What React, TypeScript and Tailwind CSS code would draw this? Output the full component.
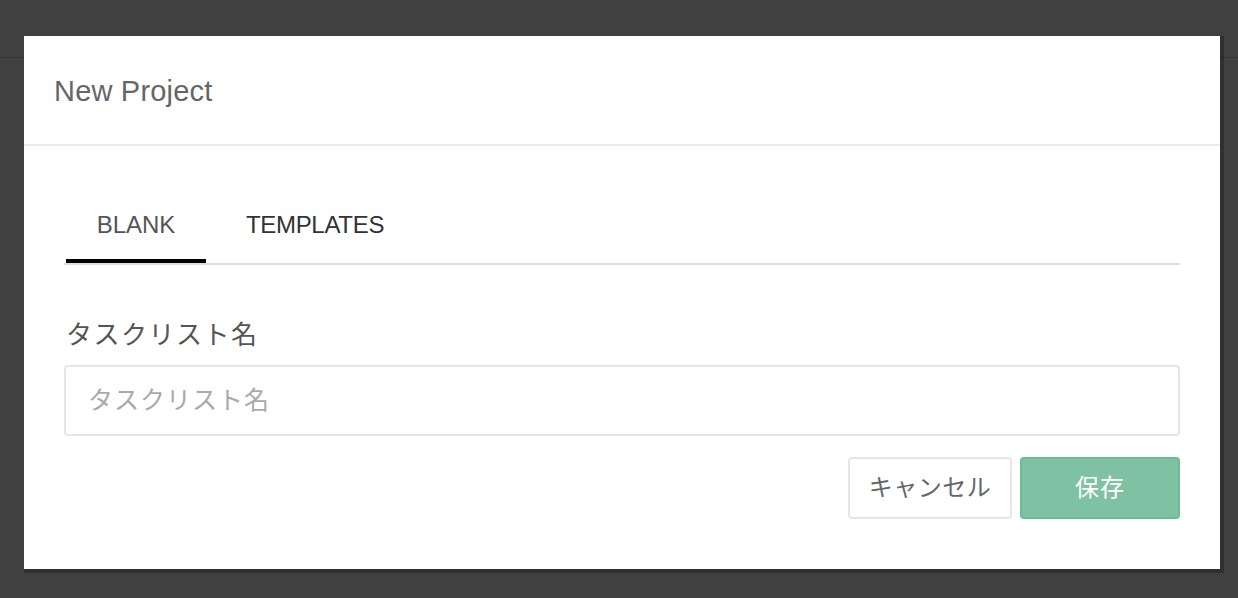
import React, { useState } from 'react';

const font = { fontFamily: '"Liberation Sans", "Noto Sans CJK JP", sans-serif' };

const App: React.FC = () => {
  const [tab, setTab] = useState<'blank' | 'templates'>('blank');
  const [name, setName] = useState('');

  return (
    <div className="min-h-[598px] w-full bg-[#404040] relative overflow-hidden" style={font}>
      {/* app header behind the overlay */}
      <div className="h-[58px] border-b border-[#353535]" />

      <div className="absolute left-[24px] top-[36px] w-[1196px] bg-white shadow-[2px_2px_0_2px_rgba(0,0,0,0.25)]">
        <div className="h-[110px] flex items-center px-[30px] pt-[4px] border-b-2 border-[#ebebeb]">
          <h2 className="text-[29px] text-[#666] tracking-[0.2px]">New Project</h2>
        </div>

        <div className="px-[40px] pt-[44px] pb-[50px]">
          <div className="flex border-b-2 border-[#dedede]">
            <button
              onClick={() => setTab('blank')}
              className={`w-[140px] h-[73px] ml-[2px] border-b-4 text-[24px] ${
                tab === 'blank' ? 'text-[#555] border-black' : 'text-[#333] border-transparent'
              }`}
            >
              BLANK
            </button>
            <button
              onClick={() => setTab('templates')}
              className={`w-[218px] h-[73px] border-b-4 text-[24px] tracking-[-0.3px] ${
                tab === 'templates' ? 'text-[#555] border-black' : 'text-[#333] border-transparent'
              }`}
            >
              TEMPLATES
            </button>
          </div>

          <label className="block mt-[52px] ml-[2px] text-[26px] leading-[36px] text-[#555] tracking-[1.5px]">
            タスクリスト名
          </label>
          <input
            value={name}
            onChange={(e) => setName(e.target.value)}
            placeholder="タスクリスト名"
            className="mt-[12px] w-full h-[71px] px-[22px] border-2 border-[#e6e6e6] rounded-[4px] text-[25px] text-[#555] placeholder:text-[#aaa] tracking-[1px] outline-none"
          />

          <div className="flex justify-end gap-[8px] mt-[21px]">
            <button className="w-[164px] h-[62px] border-2 border-[#e6e6e6] rounded-[4px] text-[24px] text-[#666] tracking-[0.5px]">
              キャンセル
            </button>
            <button className="w-[160px] h-[62px] border-2 border-[#6dba94] bg-[#7fc1a3] rounded-[4px] text-[24px] text-white tracking-[1px]">
              保存
            </button>
          </div>
        </div>
      </div>
    </div>
  );
};

export default App;
